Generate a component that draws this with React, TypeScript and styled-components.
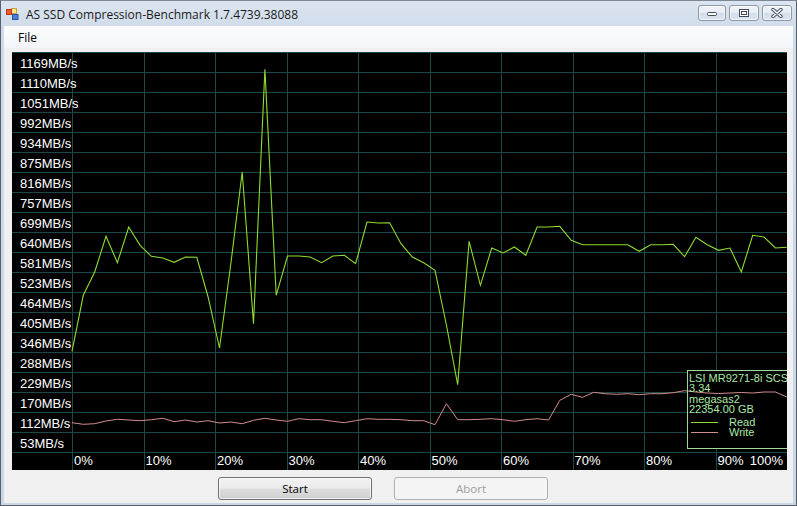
import styled, { createGlobalStyle } from 'styled-components';

const UI_FONT = `"Open Sans", "Noto Sans", sans-serif`;
const CHART_FONT = `"Liberation Sans", Arial, sans-serif`;

const GlobalStyle = createGlobalStyle`
  html, body {
    margin: 0;
    padding: 0;
    background: #ffffff;
  }
  body {
    font-family: ${UI_FONT};
  }
`;

// chart geometry (px, relative to the black panel)
const CHART_W = 775;
const CHART_H = 418;
const PLOT_LEFT = 60;
const COL_W = 71.5;
const STEP = 714.7 / 63;

const Y_LABELS = [
  '1169MB/s', '1110MB/s', '1051MB/s', '992MB/s', '934MB/s', '875MB/s', '816MB/s',
  '757MB/s', '699MB/s', '640MB/s', '581MB/s', '523MB/s', '464MB/s', '405MB/s',
  '346MB/s', '288MB/s', '229MB/s', '170MB/s', '112MB/s', '53MB/s',
];

const X_LABELS = ['0%', '10%', '20%', '30%', '40%', '50%', '60%', '70%', '80%'];

const READ = [
  299.3, 243.3, 220, 184.3, 210.7, 175, 193.3, 204.3, 206, 210.3, 205, 205.3, 245, 296,
  212, 120, 271.7, 17.3, 243.3, 204, 204, 205, 210.7, 204, 203.3, 211.7, 170, 171, 170.7,
  191.7, 205, 210.7, 218.3, 273, 332.7, 189.3, 233.3, 196, 201, 195, 203.3, 175, 175,
  174.3, 188.3, 192.7, 192.7, 192.7, 192.7, 192.7, 199.3, 192.7, 192.7, 192.3, 204.7,
  185.3, 192.7, 198.3, 196, 220, 183.3, 185, 196, 195.3,
];

const WRITE = [
  370.7, 372.3, 371.7, 369, 367.3, 368, 368.7, 367.7, 366.3, 369.7, 368, 370, 368.7, 371,
  370, 371.7, 368.3, 366.3, 368, 369.3, 366.7, 367.7, 367.7, 369.3, 370.7, 368.7, 366.7,
  367.3, 367.3, 367.7, 368.7, 368.7, 372.7, 351.7, 367.7, 367.7, 367.3, 366.7, 367.7,
  369.3, 367.7, 366.7, 368, 348.3, 342.3, 345.3, 340.3, 341.7, 342.3, 341.7, 342.7, 341.7,
  341.7, 340.7, 338.7, 340, 341, 341.5, 341, 340.5, 341, 340, 340, 345,
];

const READ_COLOR = '#8fdc2e';
const WRITE_COLOR = '#d28e8e';
const GRID_COLOR = '#1c4846';
const LEGEND_COLOR = '#ade8a6';

const toPoints = (values: number[]) =>
  values.map((v, i) => `${(PLOT_LEFT + i * STEP).toFixed(1)},${v}`).join(' ');

const Window = styled.div`
  width: 797px;
  height: 506px;
  box-sizing: border-box;
  display: flex;
  flex-direction: column;
  border: 1px solid #56606c;
  border-top-color: #7d8895;
  background: linear-gradient(#dbe5f1, #cfdbe9 30px, #c9d6e6);
  padding: 0 3px 2px 3px;
  overflow: hidden;
`;

const TitleBar = styled.div`
  height: 25px;
  display: flex;
  align-items: center;
  flex-shrink: 0;
`;

const AppIcon = styled.svg`
  width: 13px;
  height: 12px;
  margin: 1px 7px 0 2px;
`;

const Title = styled.div`
  flex: 1;
  font-size: 12px;
  color: #1b1b1b;
  white-space: nowrap;
  padding-top: 1px;
`;

const Controls = styled.div`
  display: flex;
  gap: 3px;
  align-self: flex-start;
  margin-top: 4px;
  margin-right: 1px;
`;

const ControlButton = styled.div<{ $wide?: boolean }>`
  width: ${(p) => (p.$wide ? 30 : 28)}px;
  height: 16px;
  box-sizing: border-box;
  border: 1px solid #8d99a8;
  border-radius: 3px;
  background: linear-gradient(#f3f6fa, #e3eaf3 50%, #d5dfeb 51%, #dbe4ef);
  display: flex;
  align-items: center;
  justify-content: center;
  box-shadow: inset 0 0 0 1px rgba(255, 255, 255, 0.6);
`;

const Client = styled.div`
  flex: 1;
  display: flex;
  flex-direction: column;
  background: #f0f0f0;
`;

const MenuBar = styled.div`
  height: 22px;
  display: flex;
  align-items: center;
  padding-left: 7px;
  background: linear-gradient(#fdfdfe, #f3f5f9);
  flex-shrink: 0;
`;

const MenuItem = styled.span`
  font-size: 12px;
  color: #000;
  padding: 0 7px;
`;

const Body = styled.div`
  flex: 1;
  display: flex;
  flex-direction: column;
  padding: 4px 0 0 8px;
`;

const ChartPanel = styled.div`
  position: relative;
  width: ${CHART_W}px;
  height: ${CHART_H}px;
  background: #000;
  overflow: hidden;
  display: grid;
  grid-template-rows: 400px 18px;
  font-family: ${CHART_FONT};
  font-size: 13px;
  color: #ffffff;
`;

const ChartDrawing = styled.svg`
  position: absolute;
  inset: 0;
`;

const YAxis = styled.div`
  position: relative;
  display: flex;
  flex-direction: column;
  width: ${PLOT_LEFT}px;
`;

const YLabel = styled.div`
  height: 20px;
  box-sizing: border-box;
  padding: 3px 0 0 8px;
  line-height: 17px;
  white-space: nowrap;
`;

const XAxis = styled.div`
  position: relative;
  display: grid;
  grid-template-columns: ${PLOT_LEFT}px repeat(10, 1fr);
  line-height: 18px;
`;

const XLabel = styled.div<{ $split?: boolean }>`
  padding-left: 2px;
  padding-right: ${(p) => (p.$split ? 4 : 0)}px;
  display: flex;
  justify-content: space-between;
  white-space: nowrap;
`;

const Legend = styled.div`
  position: absolute;
  left: 675px;
  top: 318px;
  width: 130px;
  height: 79px;
  box-sizing: border-box;
  border: 1px solid #9fd99a;
  padding: 2px 0 0 1px;
  color: ${LEGEND_COLOR};
  font-size: 11px;
  line-height: 10.4px;
  white-space: nowrap;
`;

const LegendKey = styled.div`
  display: flex;
  align-items: center;
  height: 10px;
  &:nth-child(5) {
    margin-top: 3px;
  }
`;

const Swatch = styled.span<{ $color: string }>`
  width: 27px;
  height: 1px;
  background: ${(p) => p.$color};
  margin: 0 11px 0 2px;
`;

const ButtonRow = styled.div`
  display: flex;
  gap: 22px;
  padding: 7px 0 0 206px;
`;

const ActionButton = styled.button`
  width: 154px;
  height: 23px;
  box-sizing: border-box;
  border: 1px solid #707070;
  border-radius: 3px;
  background: linear-gradient(#f2f2f2, #ebebeb 48%, #dddddd 52%, #cfcfcf);
  font-family: ${UI_FONT};
  font-size: 11.5px;
  color: #000;
  padding: 0;
  box-shadow: inset 0 0 0 1px rgba(255, 255, 255, 0.7);

  &:disabled {
    border-color: #adb2b5;
    background: #f4f4f4;
    color: #9d9d9d;
    box-shadow: none;
  }
`;

function Chart() {
  const verticals = Array.from({ length: 10 }, (_, k) => Math.round(PLOT_LEFT + k * COL_W) + 0.5);
  const horizontals = Array.from({ length: 21 }, (_, k) => k * 20 + 0.5);

  return (
    <ChartPanel>
      <ChartDrawing width={CHART_W} height={CHART_H} viewBox={`0 0 ${CHART_W} ${CHART_H}`}>
        {horizontals.map((y) => (
          <line key={`h${y}`} x1={0} x2={CHART_W} y1={y} y2={y} stroke={GRID_COLOR} />
        ))}
        {verticals.map((x) => (
          <line key={`v${x}`} x1={x} x2={x} y1={0} y2={CHART_H} stroke={GRID_COLOR} />
        ))}
        {/* legend area hides the grid but not the curves */}
        <rect x={675} y={318} width={100} height={79} fill="#000" />
        <polyline points={toPoints(WRITE)} fill="none" stroke={WRITE_COLOR} strokeWidth={1} />
        <polyline points={toPoints(READ)} fill="none" stroke={READ_COLOR} strokeWidth={1.1} />
      </ChartDrawing>

      <YAxis>
        {Y_LABELS.map((l) => (
          <YLabel key={l}>{l}</YLabel>
        ))}
      </YAxis>

      <XAxis>
        <span />
        {X_LABELS.map((l) => (
          <XLabel key={l}>{l}</XLabel>
        ))}
        <XLabel $split>
          <span>90%</span>
          <span>100%</span>
        </XLabel>
      </XAxis>

      <Legend>
        <div>LSI MR9271-8i SCSI Disk Device</div>
        <div>3.34</div>
        <div>megasas2</div>
        <div>22354.00 GB</div>
        <LegendKey>
          <Swatch $color={READ_COLOR} />
          Read
        </LegendKey>
        <LegendKey>
          <Swatch $color={WRITE_COLOR} />
          Write
        </LegendKey>
      </Legend>
    </ChartPanel>
  );
}

export default function App() {
  return (
    <>
      <GlobalStyle />
      <Window>
        <TitleBar>
          <AppIcon viewBox="0 0 13 12">
            <rect x="5.5" y="0.5" width="5" height="5" fill="#fbe58a" stroke="#c9a235" />
            <rect x="0.5" y="1.5" width="5" height="5" fill="#f05a2a" stroke="#b8381a" />
            <rect x="6.5" y="6.5" width="5.5" height="5" fill="#4a7fd8" stroke="#2a55a8" />
          </AppIcon>
          <Title>AS SSD Compression-Benchmark 1.7.4739.38088</Title>
          <Controls>
            <ControlButton>
              <svg width="12" height="8" viewBox="0 0 12 8">
                <rect x="1.5" y="3.5" width="9" height="3" rx="1" fill="#fff" stroke="#3f4b5a" />
              </svg>
            </ControlButton>
            <ControlButton $wide>
              <svg width="12" height="10" viewBox="0 0 12 10">
                <rect x="1.5" y="1.5" width="9" height="7" fill="#fff" stroke="#3f4b5a" />
                <rect x="3.5" y="3.5" width="5" height="3" fill="none" stroke="#3f4b5a" />
              </svg>
            </ControlButton>
            <ControlButton $wide>
              <svg width="14" height="10" viewBox="0 0 14 10">
                <path d="M3 1.5 L11 8.5 M11 1.5 L3 8.5" stroke="#3f4b5a" strokeWidth="3.4" strokeLinecap="round" />
                <path d="M3 1.5 L11 8.5 M11 1.5 L3 8.5" stroke="#fff" strokeWidth="1.6" strokeLinecap="round" />
              </svg>
            </ControlButton>
          </Controls>
        </TitleBar>
        <Client>
          <MenuBar>
            <MenuItem>File</MenuItem>
          </MenuBar>
          <Body>
            <Chart />
            <ButtonRow>
              <ActionButton>Start</ActionButton>
              <ActionButton disabled>Abort</ActionButton>
            </ButtonRow>
          </Body>
        </Client>
      </Window>
    </>
  );
}
